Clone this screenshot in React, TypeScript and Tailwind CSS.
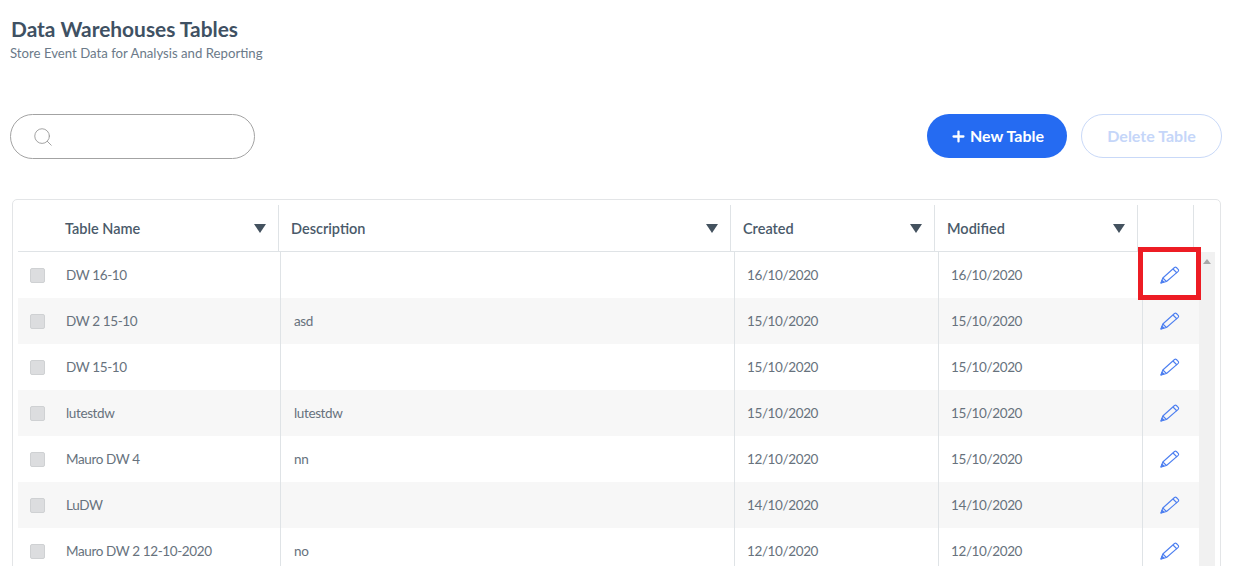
import { Plus, Search } from 'lucide-react';

const font = "font-['Lato','Noto_Sans',sans-serif]";

const rows = [
  { name: 'DW 16-10', desc: '', created: '16/10/2020', modified: '16/10/2020' },
  { name: 'DW 2 15-10', desc: 'asd', created: '15/10/2020', modified: '15/10/2020' },
  { name: 'DW 15-10', desc: '', created: '15/10/2020', modified: '15/10/2020' },
  { name: 'lutestdw', desc: 'lutestdw', created: '15/10/2020', modified: '15/10/2020' },
  { name: 'Mauro DW 4', desc: 'nn', created: '12/10/2020', modified: '15/10/2020' },
  { name: 'LuDW', desc: '', created: '14/10/2020', modified: '14/10/2020' },
  { name: 'Mauro DW 2 12-10-2020', desc: 'no', created: '12/10/2020', modified: '12/10/2020' },
];

function Pencil() {
  return (
    <svg width="20" height="18" viewBox="0 0 20 18" fill="none" stroke="#4d7ff0" strokeWidth="1.1" strokeLinejoin="round">
      <path d="M1 17 L2.8 12 L14.5 1.5 Q15.5 .8 16.4 1.5 L18.4 3.6 Q19 4.6 18.2 5.4 L6.5 15.5 Z" />
      <path d="M13 3 L17 7 M2.8 12 L6.5 15.5" />
      <path d="M1 17 L2 14.2 L3.9 16 Z" fill="#4d7ff0" />
    </svg>
  );
}

function HeaderCell({ label, className }: { label: string; className: string }) {
  return (
    <div className={`flex items-center justify-between border-r border-[#dfe3e6] pr-[12px] pt-px text-[14.5px] font-semibold text-[#4a5a6a] ${className}`}>
      <span>{label}</span>
      <span className="h-0 w-0 border-x-[6px] border-t-[9px] border-x-transparent border-t-[#44525f]" />
    </div>
  );
}

export default function App() {
  return (
    <div className={`relative h-[566px] overflow-hidden bg-white ${font}`}>
      <div className="pl-[10px] pt-[16px]">
        <h1 className="pl-px text-[20.9px] font-bold leading-[26px] text-[#3f5163]">Data Warehouses Tables</h1>
        <p className="text-[13.2px] leading-[22px] text-[#6b7a89]">Store Event Data for Analysis and Reporting</p>
      </div>

      <div className="mt-[50px] flex items-start justify-between pl-[10px] pr-[25px]">
        <div className="flex h-[45px] w-[245px] items-center rounded-full border border-[#a3a3a3] pl-[21px]">
          <Search size={22} strokeWidth={1} className="text-[#9a9a9a]" />
        </div>
        <div className="flex gap-[14px]">
          <button className="flex h-[44px] w-[140px] items-center justify-center gap-[3px] rounded-full bg-[#256bf2] text-[16px] font-bold text-white">
            <Plus size={17} strokeWidth={3.2} />
            New Table
          </button>
          <button className="h-[44px] w-[141px] rounded-full border border-[#c9d9f8] text-[16px] font-bold text-[#c5d6f9]">
            Delete Table
          </button>
        </div>
      </div>

      <div className="ml-[12px] mt-[40px] w-[1209px] rounded-[5px] border border-[#e3e5e7] pl-[5px] pt-[5px]">
        <div className="flex h-[47px] w-[1176px] border-b border-[#dfe3e6]">
          <HeaderCell label="Table Name" className="w-[261px] pl-[47px]" />
          <HeaderCell label="Description" className="w-[452px] pl-[12px]" />
          <HeaderCell label="Created" className="w-[204px] pl-[12px]" />
          <HeaderCell label="Modified" className="w-[203px] pl-[12px]" />
          <div className="w-[56px] border-r border-[#dfe3e6]" />
        </div>
        <div className="flex">
          <div className="w-[1181px]">
            {rows.map((row, i) => (
              <div key={i} className={`flex h-[46px] text-[13.5px] tracking-[-0.38px] text-[#67727d] ${i % 2 === 1 ? 'bg-[#f7f7f7]' : 'bg-white'}`}>
                <div className="flex w-[263px] items-center border-r border-[#dfe3e6]">
                  <span className="ml-[12px] h-[15px] w-[15px] rounded-[2px] border border-[#cfd1d3] bg-[#dcdddf]" />
                  <span className="ml-[21px]">{row.name}</span>
                </div>
                <div className="flex w-[454px] items-center border-r border-[#dfe3e6] pl-[13px]">{row.desc}</div>
                <div className="flex w-[204px] items-center border-r border-[#dfe3e6] pl-[12px]">{row.created}</div>
                <div className="flex w-[204px] items-center border-r border-[#dfe3e6] pl-[12px]">{row.modified}</div>
                <div className="flex w-[56px] items-center justify-center pr-[2px]"><Pencil /></div>
              </div>
            ))}
          </div>
          <div className="h-[322px] w-[16px] bg-[#f1f1f1]">
            <div className="mx-auto mt-[7px] h-0 w-0 border-x-[4px] border-b-[5px] border-x-transparent border-b-[#a8a8a8]" />
          </div>
        </div>
      </div>

      <div className="absolute left-[1138px] top-[247px] h-[53px] w-[63px] border-[5px] border-[#ed1c24]" />
    </div>
  );
}
